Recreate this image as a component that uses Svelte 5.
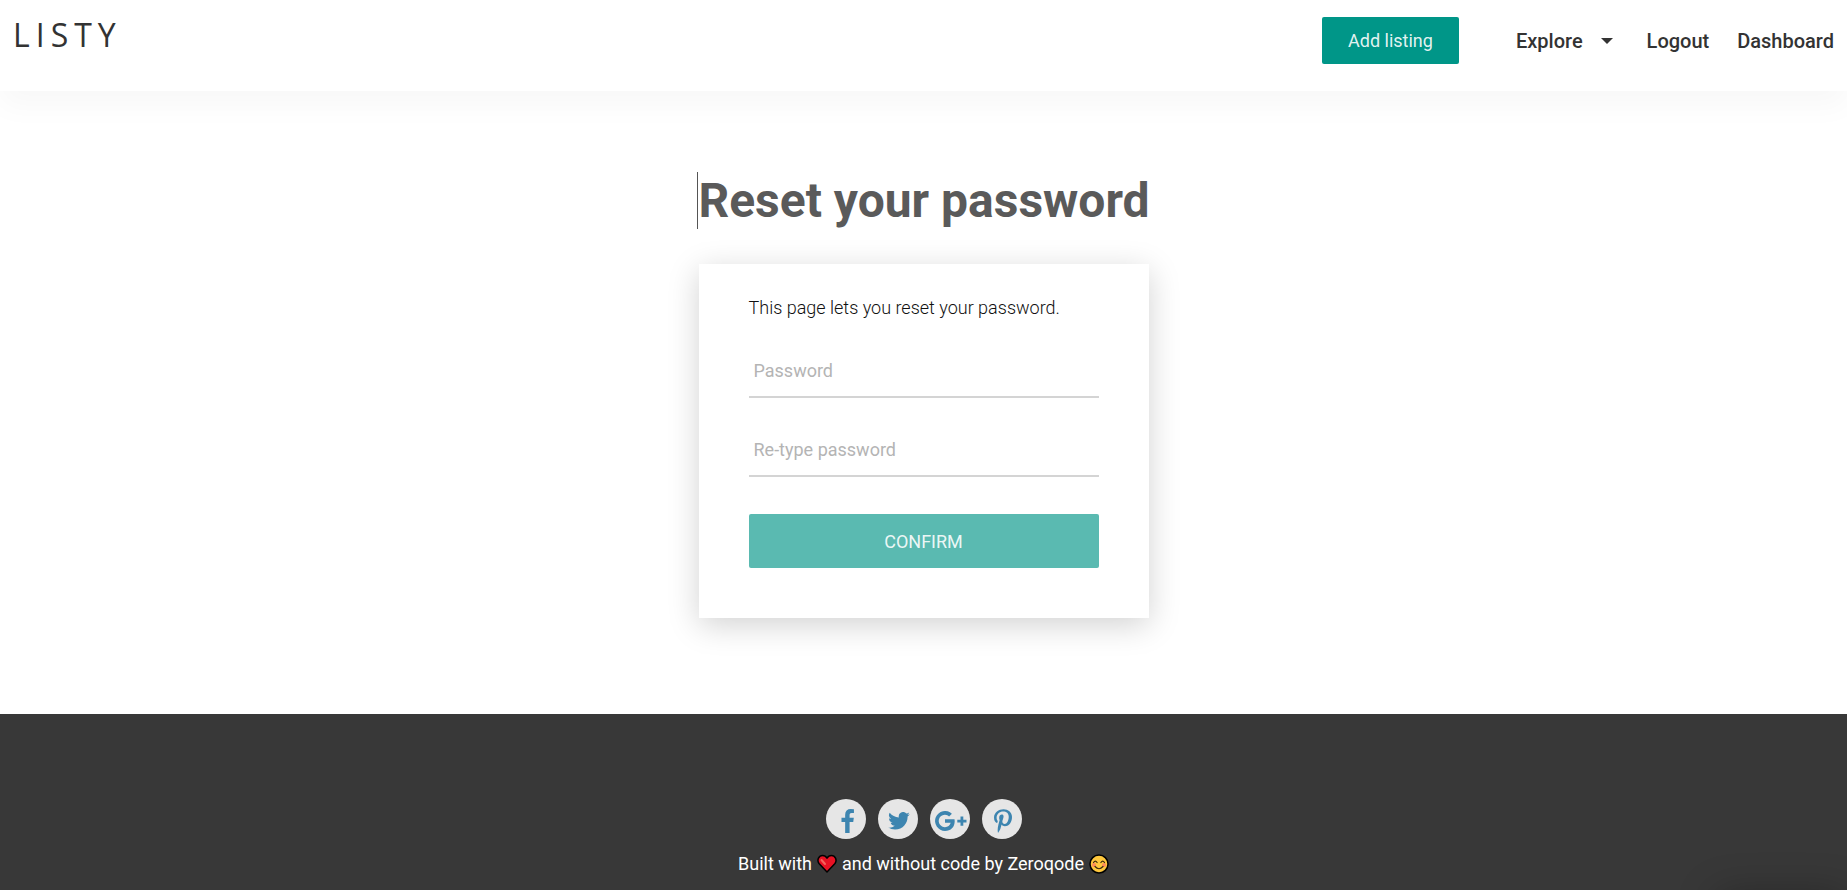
<script>
  // Font Awesome style glyphs, each with its own viewBox
  const socials = [
    {
      name: 'Facebook',
      box: '0 0 1024 1664',
      w: 15,
      h: 24,
      d: 'M959 12v264H802q-86 0-116 36t-30 108v189h293l-39 296H656v759H350V905H95V609h255V391q0-186 104-288.500T731 0q147 0 228 12z',
    },
    {
      name: 'Twitter',
      box: '0 0 24 20',
      w: 22,
      h: 18,
      d: 'M23.950 2.400a10 10 0 0 1-2.800.770 4.900 4.900 0 0 0 2.160-2.720 10 10 0 0 1-3.120 1.180 4.920 4.920 0 0 0-8.380 4.480A14 14 0 0 1 1.670.970a4.920 4.920 0 0 0 1.520 6.570 4.900 4.900 0 0 1-2.230-.610v.060a4.920 4.920 0 0 0 3.950 4.820 5 5 0 0 1-2.210.080 4.940 4.940 0 0 0 4.600 3.420A9.870 9.870 0 0 1 0 17.350a13.990 13.990 0 0 0 7.550 2.210c9.050 0 14-7.500 14-13.980 0-.210 0-.420-.020-.630a9.940 9.940 0 0 0 2.460-2.550z',
    },
    {
      name: 'Google Plus',
      box: '0 0 32 20',
      w: 32,
      h: 20,
      d: 'M10 8.200v3.600h5.700c-.700 2.700-2.900 4.400-5.700 4.400a6.200 6.200 0 1 1 4.100-10.800l2.800-2.700A10 10 0 1 0 10 20c5.800 0 9.700-4 9.700-9.800 0-.700-.100-1.300-.200-2zM25.500 5.500v3.200h-3.200v2.800h3.200v3.200h2.800v-3.200h3.200V8.700h-3.200V5.500z',
    },
    {
      name: 'Pinterest',
      box: '0 0 384 512',
      w: 18,
      h: 24,
      d: 'M204 6.500C101.400 6.500 0 74.900 0 185.600 0 256 39.600 296 63.600 296c9.900 0 15.600-27.600 15.600-35.400 0-9.300-23.700-29.100-23.700-67.800 0-80.400 61.200-137.400 140.400-137.400 68.100 0 118.500 38.700 118.500 109.800 0 53.100-21.300 152.700-90.300 152.700-24.900 0-46.200-18-46.200-43.800 0-37.800 26.400-74.400 26.400-113.400 0-66.200-93.900-54.200-93.900 25.800 0 16.800 2.100 35.400 9.600 50.700-13.800 59.400-42 147.900-42 209.100 0 18.900 2.700 37.500 4.500 56.400 3.400 3.800 1.700 3.400 6.900 1.500 50.400-69 48.600-82.500 71.400-172.800 12.300 23.400 44.100 36 69.300 36 106.200 0 153.900-103.500 153.900-196.800C384 71.300 298.200 6.500 204 6.500z',
    },
  ];

  let password = $state('');
  let retype = $state('');
</script>

<div class="page">
  <header>
    <a class="logo" href="/">LISTY</a>
    <nav>
      <button class="add" type="button">Add listing</button>
      <button class="explore" type="button">
        Explore
        <svg width="12" height="6" viewBox="0 0 12 6" aria-hidden="true"><path d="M0 0h12L6 6z" /></svg>
      </button>
      <a href="/logout">Logout</a>
      <a href="/dashboard">Dashboard</a>
    </nav>
  </header>

  <main>
    <h1>Reset your password</h1>
    <form onsubmit={(e) => e.preventDefault()}>
      <p>This page lets you reset your password.</p>
      <input type="password" placeholder="Password" aria-label="Password" bind:value={password} />
      <input type="password" placeholder="Re-type password" aria-label="Re-type password" bind:value={retype} />
      <button class="confirm" type="submit">CONFIRM</button>
    </form>
  </main>

  <footer>
    <div class="socials">
      {#each socials as s}
        <a href="/social" aria-label={s.name}>
          <svg width={s.w} height={s.h} viewBox={s.box} aria-hidden="true"><path d={s.d} /></svg>
        </a>
      {/each}
    </div>
    <div class="credit">
      <span>Built with</span>
      <svg width="20" height="20" viewBox="0 0 20 20" role="img" aria-label="love">
        <path d="M10 18 2 9.500C-.500 6 2 1.500 5.500 1.500c2 0 3.500 1 4.500 2.700 1-1.700 2.500-2.700 4.500-2.700C18 1.500 20.500 6 18 9.500z" fill="#e81224" stroke="#000" stroke-width="1.500" stroke-linejoin="round" />
        <path d="M4.500 6 8 10" stroke="#f4645c" stroke-width="2" stroke-linecap="round" />
      </svg>
      <span>and without code by Zeroqode</span>
      <svg width="20" height="20" viewBox="0 0 20 20" role="img" aria-label="smile">
        <circle cx="10" cy="10" r="9" fill="#ffc83d" stroke="#000" stroke-width="1.500" />
        <circle cx="5" cy="11" r="2" fill="#ff8a5c" />
        <circle cx="15" cy="11" r="2" fill="#ff8a5c" />
        <path d="M4.500 8.500q1.800-2.600 3.600 0M11.900 8.500q1.800-2.600 3.600 0M6 12.500q4 4.500 8 0" fill="none" stroke="#3b2a10" stroke-width="1.200" stroke-linecap="round" />
      </svg>
    </div>
  </footer>
  <div class="widget"></div>
</div>

<style>
  :global(body) {
    margin: 0;
  }
  .page {
    display: flex;
    flex-direction: column;
    min-height: 100vh;
    background: #fff;
    color: #333;
    font-family: Roboto, sans-serif;
    font-size: 18px;
  }
  a {
    color: inherit;
    text-decoration: none;
  }
  button {
    border: none;
    cursor: pointer;
    font: inherit;
  }
  header {
    display: flex;
    justify-content: space-between;
    align-items: flex-start;
    box-sizing: border-box;
    height: 91px;
    padding: 17px 13px 0;
    box-shadow: 0 15px 30px rgba(0, 0, 0, 0.03);
  }
  .logo {
    font-family: 'Open Sans', sans-serif;
    font-size: 32px;
    font-weight: 500;
    line-height: 36px;
    letter-spacing: 6px;
  }
  nav {
    display: flex;
    align-items: center;
    font-size: 20px;
    font-weight: 500;
    gap: 28px;
  }
  .add {
    width: 137px;
    height: 47px;
    margin-right: 29px;
    border-radius: 2px;
    background: #009688;
    color: rgba(255, 255, 255, 0.9);
    font-size: 18px;
    font-weight: 400;
  }
  .explore {
    display: flex;
    align-items: center;
    gap: 18px;
    padding: 0;
    margin-right: 6px;
    background: none;
    color: inherit;
  }
  svg {
    display: block;
    flex: none;
  }
  .explore svg {
    fill: #333;
  }
  main {
    display: flex;
    flex-direction: column;
    align-items: center;
    padding: 81px 0 96px;
  }
  h1 {
    margin: 0 0 35px;
    border-left: 1px solid #555;
    color: #5a5a5a;
    font-size: 48px;
    font-weight: 700;
    line-height: 57px;
  }
  form {
    display: flex;
    flex-direction: column;
    box-sizing: border-box;
    width: 450px;
    max-width: 100%;
    padding: 32px 50px 50px;
    box-shadow: 0 7px 30px rgba(0, 0, 0, 0.18);
  }
  p {
    margin: 0 0 25px;
    color: #111;
    font-weight: 300;
    line-height: 24px;
  }
  input {
    height: 53px;
    margin-bottom: 26px;
    padding: 0 5px;
    box-sizing: border-box;
    border: none;
    border-bottom: 2px solid #d4d4d4;
    outline: none;
    background: none;
    color: inherit;
    font: inherit;
  }
  input::placeholder {
    color: #b4b4b4;
  }
  .confirm {
    height: 54px;
    margin-top: 11px;
    border-radius: 2px;
    background: #5abab1;
    color: rgba(255, 255, 255, 0.9);
  }
  footer {
    flex: 1;
    padding: 85px 0 14px;
    background: #383838;
    color: #fff;
  }
  .socials {
    display: flex;
    justify-content: center;
    gap: 12px;
  }
  .socials a {
    display: flex;
    align-items: center;
    justify-content: center;
    box-sizing: border-box;
    width: 40px;
    height: 40px;
    padding: 3px 0 0 3px;
    border-radius: 50%;
    background: #e6e6e6;
  }
  .socials svg {
    fill: #3d85b0;
  }
  .credit {
    display: flex;
    align-items: center;
    justify-content: center;
    gap: 5px;
    margin-top: 13px;
    line-height: 24px;
  }
  .widget {
    position: fixed;
    top: 100%;
    right: 0;
    width: 130px;
    height: 60px;
    box-shadow: 0 5px 40px rgba(0, 0, 0, 0.3);
  }
</style>
